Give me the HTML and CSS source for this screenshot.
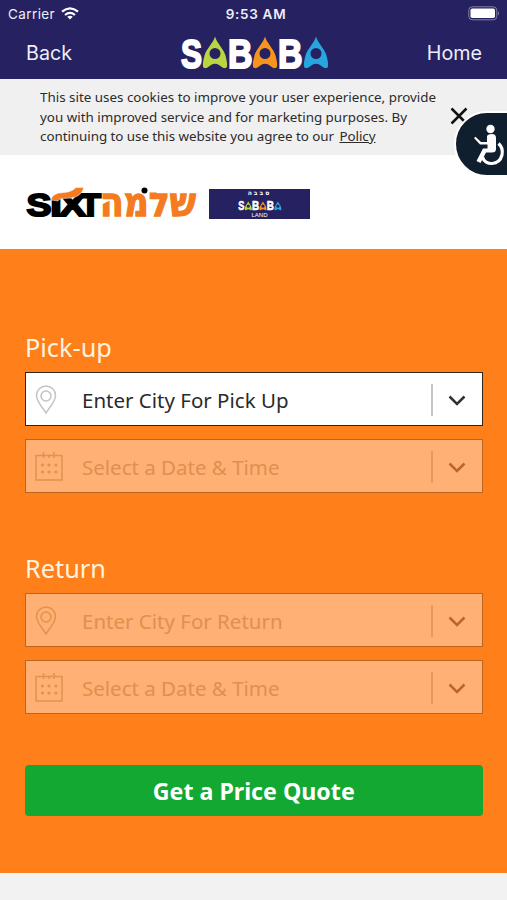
FILE: index.html
```
<!DOCTYPE html>
<html lang="en">
<head>
<meta charset="utf-8">
<title>Sababa</title>
<link rel="stylesheet" href="styles.css">
</head>
<body>
<svg class="defs" aria-hidden="true">
  <symbol id="figure" viewBox="0 0 26 32">
    <path fill-rule="evenodd" d="M13 0C14.500 6 22 13 23.500 19C24.500 23 25.500 27 25 30C24.500 32 22 32 20.500 31L17 28.500Q13 26 9 28.500L5.500 31C4 32 1.500 32 1 30C.5 27 1.500 23 2.500 19C4 13 11.500 6 13 0ZM13 11.500A5.500 5.500 0 1 0 13 22.500A5.500 5.500 0 1 0 13 11.500Z"/>
  </symbol>
  <symbol id="pin" viewBox="0 0 22 30">
    <g fill="none" stroke="currentColor" stroke-width="1.500"><path d="M11 28C9 24 1.500 17 1.500 10.500A9.500 9.500 0 0 1 20.500 10.500C20.500 17 13 24 11 28Z"/><circle cx="11" cy="11" r="5"/></g>
  </symbol>
  <symbol id="calendar" viewBox="0 0 28 30">
    <path fill="none" stroke="currentColor" stroke-width="1.500" d="M1 3.500H27V28H1ZM8.500 0V6M14 2.500V6M19 0V6"/>
    <g fill="currentColor"><circle cx="7.500" cy="13" r="1.600"/><circle cx="14" cy="13" r="1.600"/><circle cx="21" cy="13" r="1.600"/><circle cx="7.500" cy="20" r="1.600"/><circle cx="14" cy="20" r="1.600"/><circle cx="21" cy="20" r="1.600"/></g>
  </symbol>
  <symbol id="chevron" viewBox="0 0 18 12"><path fill="none" stroke="currentColor" stroke-width="2.500" d="M1.500 1.500L9 9L16.500 1.500"/></symbol>
</svg>

<header class="top">
  <div class="status">
    <div class="carrier"><span>Carrier</span>
      <svg width="18" height="13" viewBox="0 0 18 13"><g fill="none" stroke="#fff" stroke-width="2.200"><path d="M1 4.700Q9-2 17 4.700"/><path d="M4 8Q9 3.800 14 8"/></g><path fill="#fff" d="M6.200 9.700Q9 7.700 11.800 9.700L9 12.500Z"/></svg>
    </div>
    <span class="clock">9:53 AM</span>
    <svg class="battery" width="32" height="15" viewBox="0 0 32 15"><rect x=".8" y=".8" width="28" height="13" rx="3.500" fill="none" stroke="#85819f"/><rect x="2.500" y="2.500" width="24.500" height="9.600" rx="1.800" fill="#fff"/><path fill="#85819f" d="M30 5Q32 7.300 30 9.500Z"/></svg>
  </div>
  <nav class="nav">
    <a class="back">Back</a>
    <svg class="brand" width="150" height="34" viewBox="0 0 150 34">
      <g class="logo-letters">
        <text x="1" y="31.500" textLength="21" lengthAdjust="spacingAndGlyphs">S</text>
        <text x="48" y="31.500" textLength="24.500" lengthAdjust="spacingAndGlyphs">B</text>
        <text x="98" y="31.500" textLength="24.500" lengthAdjust="spacingAndGlyphs">B</text>
      </g>
      <use href="#figure" x="22" y="0.500" width="26" height="32" fill="#b9d641"/>
      <use href="#figure" x="72" y="0.500" width="26" height="32" fill="#f7941e"/>
      <use href="#figure" x="123" y="0.500" width="26" height="32" fill="#27a5df"/>
    </svg>
    <a class="home">Home</a>
  </nav>
</header>

<section class="cookies">
  <p>This site uses cookies to improve your user experience, provide<br>you with improved service and for marketing purposes. By<br><span class="last">continuing to use this website you agree to our <a class="policy">Policy</a></span></p>
  <svg class="close" width="18" height="18" viewBox="0 0 18 18"><path stroke="#111" stroke-width="2.500" d="M1.500 1.500L16.500 16.500M16.500 1.500L1.500 16.500"/></svg>
  <div class="access">
    <svg width="32" height="42" viewBox="0 0 32 42"><circle cx="16.500" cy="5" r="4.200" fill="#fff"/><path fill="#fff" d="M13 12Q14 10 18 10Q22 10 22 14V25Q22 28.500 18 28.500H12L6.500 39L2.500 37L9 24.500H13.500V20.500H6L0 14L1.500 12.800L7 18H13Z"/><path fill="none" stroke="#fff" stroke-width="3.200" d="M24.500 19.500Q29.500 24 28 31C25 42 11 42 8.500 33"/></svg>
  </div>
</section>

<section class="partners">
  <svg class="sixt" width="172" height="34" viewBox="0 0 172 34">
    <g class="sixt-latin">
      <text x="0.500" y="29.500" textLength="25" lengthAdjust="spacingAndGlyphs">S</text>
      <text x="24" y="29.500" textLength="12" lengthAdjust="spacingAndGlyphs">ı</text>
      <text x="33" y="29.500" textLength="27" lengthAdjust="spacingAndGlyphs">X</text>
      <text x="54" y="29.500" textLength="21" lengthAdjust="spacingAndGlyphs">T</text>
    </g>
    <path fill="#f47b20" stroke="#fff" stroke-width=".5" d="M25 14Q26 8 34 7L42 6Q47 5 50 1.500H58Q55 11 45 12L37 12.500Q33 12.500 32 15Z"/>
    <clipPath id="cap"><rect x="70" y="6.500" width="102" height="28"/></clipPath>
    <g class="sixt-hebrew" clip-path="url(#cap)">
      <text x="74" y="30" textLength="96" lengthAdjust="spacingAndGlyphs">שלמה</text>
    </g>
    <circle cx="118.500" cy="4.500" r="3"/>
  </svg>
  <div class="land">
    <span class="land-he" lang="he">סבבה</span>
    <svg width="44" height="10" viewBox="0 0 150 34">
      <g class="logo-letters">
        <text x="1" y="31.500" textLength="21" lengthAdjust="spacingAndGlyphs">S</text>
        <text x="48" y="31.500" textLength="24.500" lengthAdjust="spacingAndGlyphs">B</text>
        <text x="98" y="31.500" textLength="24.500" lengthAdjust="spacingAndGlyphs">B</text>
      </g>
      <use href="#figure" x="22" y="0.500" width="26" height="32" fill="#b9d641"/>
      <use href="#figure" x="72" y="0.500" width="26" height="32" fill="#f7941e"/>
      <use href="#figure" x="123" y="0.500" width="26" height="32" fill="#27a5df"/>
    </svg>
    <span class="land-en">LAND</span>
  </div>
</section>

<main class="booking">
  <h2>Pick-up</h2>
  <div class="field"><svg class="icon" width="22" height="30"><use href="#pin"/></svg><span class="label">Enter City For Pick Up</span><i class="rule"></i><svg class="arrow" width="18" height="12"><use href="#chevron"/></svg></div>
  <div class="field off"><svg class="icon cal" width="28" height="30"><use href="#calendar"/></svg><span class="label">Select a Date &amp; Time</span><i class="rule"></i><svg class="arrow" width="18" height="12"><use href="#chevron"/></svg></div>
  <h2 class="second">Return</h2>
  <div class="field off"><svg class="icon" width="22" height="30"><use href="#pin"/></svg><span class="label">Enter City For Return</span><i class="rule"></i><svg class="arrow" width="18" height="12"><use href="#chevron"/></svg></div>
  <div class="field off"><svg class="icon cal" width="28" height="30"><use href="#calendar"/></svg><span class="label">Select a Date &amp; Time</span><i class="rule"></i><svg class="arrow" width="18" height="12"><use href="#chevron"/></svg></div>
  <button class="quote">Get a Price Quote</button>
</main>
</body>
</html>
```
FILE: styles.css
```
* { box-sizing: border-box; }
body { margin: 0; height: 900px; overflow: hidden; background: #f2f2f2; font-family: "Noto Sans", "Open Sans", sans-serif; color: #2b2b2b; }
svg { display: block; flex: none; overflow: visible; }
.defs { position: absolute; width: 0; height: 0; }
.logo-letters { fill: #fff; stroke: #fff; stroke-width: 2; font: bold 41px "Liberation Sans", sans-serif; }

.top { height: 79px; background: #262262; color: #eeedf8; font-family: Inter, sans-serif; }
.status { height: 27px; display: grid; grid-template-columns: 1fr auto 1fr; align-items: center; padding: 0 7px 0 8px; font-size: 13.5px; }
.carrier { display: flex; align-items: center; gap: 6px; letter-spacing: .4px; }
.clock { font-weight: 600; font-size: 13.5px; letter-spacing: .7px; margin-left: 4px; }
.battery { justify-self: end; }
.nav { height: 52px; display: grid; grid-template-columns: 1fr auto 1fr; align-items: center; padding: 0 25px 0 26px; font-size: 19.7px; }
.brand { margin: 0 0 0 2px; }
.home { justify-self: end; }

.cookies { position: relative; height: 76px; padding: 9px 0 0 40px; background: #f0f0f0; font-size: 13.4px; line-height: 19.5px; }
.cookies p { margin: 0; white-space: nowrap; }
.last { letter-spacing: -.05px; }
.policy { text-decoration: underline; margin-left: 2px; }
.close { position: absolute; left: 450px; top: 28px; }
.access { position: absolute; right: -2px; top: 32px; width: 55px; height: 66px; border: 2px solid #fff; border-radius: 34px 0 0 34px; background: #0f1f2d; z-index: 1; padding: 11px 0 0 18px; }

.partners { height: 94px; background: #fff; display: flex; align-items: flex-start; padding: 31px 26px 0; }
.sixt { margin-right: 11px; }
.sixt-latin { fill: #000; stroke: #000; stroke-width: 2; font: bold 32px "Liberation Sans", sans-serif; }
.sixt-hebrew { fill: #f47b20; stroke: #f47b20; stroke-width: 1.3; font: bold 40px "DejaVu Sans", sans-serif; }
.land { width: 101px; height: 30px; margin-top: 3px; background: #262262; color: #fff; display: flex; flex-direction: column; align-items: center; font-family: "DejaVu Sans", sans-serif; }
.land-he { font-size: 6px; line-height: 8px; height: 12px; letter-spacing: 2px; font-weight: bold; }
.land-en { font: 6px/7px "Liberation Sans", sans-serif; margin-top: 1px; }

.booking { height: 624px; padding: 80px 24.5px 0 25px; background: #ff7f1a; }
h2 { margin: 0 0 6px; height: 37px; line-height: 36px; font-size: 25.3px; font-weight: 400; color: #fff3df; }
h2.second { margin-top: 57px; }
.field { height: 54px; margin-bottom: 13px; padding-top: 1px; border: 1.5px solid #33241a; background: #fff; display: flex; align-items: center; font-size: 20.5px; }
.icon { margin: 0 25px 0 9px; color: #c4c4c4; }
.icon.cal { margin: 0 19px 0 9px; }
.label { flex: 1; white-space: nowrap; }
.rule { width: 2px; height: 32px; background: #c5c5c5; }
.arrow { margin: 2px 16px 0 15px; color: #333; }
.off { background: #ffb075; border-color: #bb651f; color: #df8f50; }
.off .icon { color: #e0934f; }
.off .rule { background: #e39a5f; }
.off .arrow { color: #bd6529; }
.quote { display: block; width: 100%; height: 51px; margin-top: 51px; border: 0; border-radius: 4px; background: #12a832; color: #fff; font: bold 23.2px "Noto Sans", sans-serif; padding: 0; }
```
